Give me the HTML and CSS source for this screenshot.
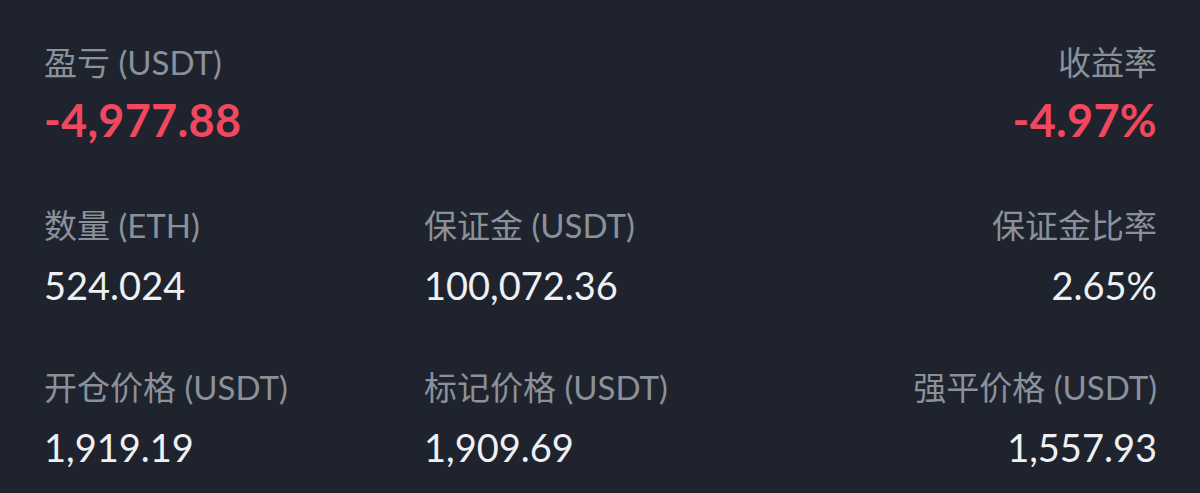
FILE: index.html
```html
<!DOCTYPE html>
<html lang="zh-CN">
<head>
    <meta charset="UTF-8">
    <meta name="viewport" content="width=device-width, initial-scale=1.0">
    <title>仓位详情</title>
    <link rel="stylesheet" href="styles.css">
</head>
<body>
    <div class="position">
        <!-- PnL row -->
        <div class="row top">
            <div class="cell">
                <div class="label">盈亏 (USDT)</div>
                <div class="value big loss">-4,977.88</div>
            </div>
            <div class="cell"></div>
            <div class="cell right">
                <div class="label">收益率</div>
                <div class="value big loss">-4.97%</div>
            </div>
        </div>
        <!-- Size / margin row -->
        <div class="row">
            <div class="cell">
                <div class="label">数量 (ETH)</div>
                <div class="value">524.024</div>
            </div>
            <div class="cell">
                <div class="label">保证金 (USDT)</div>
                <div class="value">100,072.36</div>
            </div>
            <div class="cell right">
                <div class="label">保证金比率</div>
                <div class="value">2.65%</div>
            </div>
        </div>
        <!-- Prices row -->
        <div class="row">
            <div class="cell">
                <div class="label">开仓价格 (USDT)</div>
                <div class="value">1,919.19</div>
            </div>
            <div class="cell">
                <div class="label">标记价格 (USDT)</div>
                <div class="value">1,909.69</div>
            </div>
            <div class="cell right">
                <div class="label">强平价格 (USDT)</div>
                <div class="value">1,557.93</div>
            </div>
        </div>
    </div>
</body>
</html>
```

FILE: styles.css
```css
* {
    margin: 0;
    padding: 0;
    box-sizing: border-box;
}

body {
    font-family: "Lato", "Noto Sans CJK SC", sans-serif;
    background-color: #1f232d;
    color: #eaecef;
    height: 493px;
    overflow: hidden;
}

.position {
    padding: 42px 43px 0 44px;
    display: flex;
    flex-direction: column;
    gap: 60px;
}

.row {
    display: grid;
    grid-template-columns: 380px 1fr 1fr;
}

.cell.right {
    text-align: right;
}

.label {
    font-size: 33px;
    line-height: 40px;
    color: #8b919b;
}

.value {
    margin-top: 18px;
    font-size: 38px;
    line-height: 44px;
    color: #eef0f3;
}

.value.big {
    margin-top: 13px;
    font-size: 45px;
    line-height: 50px;
    font-weight: 700;
    letter-spacing: 0.3px;
}

.loss {
    color: #f0485f;
}
```
